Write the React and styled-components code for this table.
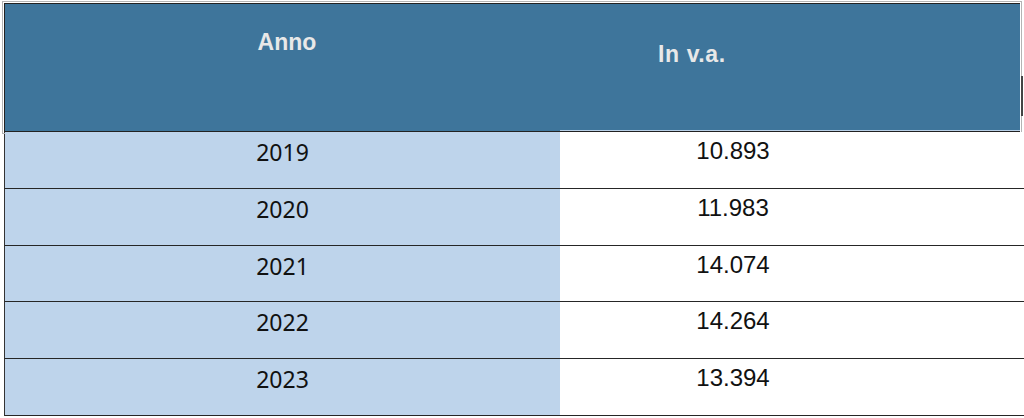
import React from 'react';
import styled, { createGlobalStyle } from 'styled-components';

const rows = [
  { year: '2019', value: '10.893' },
  { year: '2020', value: '11.983' },
  { year: '2021', value: '14.074' },
  { year: '2022', value: '14.264' },
  { year: '2023', value: '13.394' }
];

const App = () => (
  <>
    <GlobalStyle />
    <Frame>
      <HeadWrap>
        <Head>
          <HeadCell $pad="25px 0 0 9px" $align="center">Anno</HeadCell>
          <HeadCell $pad="37px 0 0 98px" $align="left" $spacing="0.6px" $underline>
            In v.a.
          </HeadCell>
        </Head>
        <ResizeHandle />
      </HeadWrap>
      {rows.map(r => (
        <Row key={r.year}>
          <YearCell>{r.year}</YearCell>
          <ValueCell>{r.value}</ValueCell>
        </Row>
      ))}
    </Frame>
  </>
);

const GlobalStyle = createGlobalStyle`
  html, body {
    margin: 0;
    padding: 0;
    background: #ffffff;
  }
`;

const Frame = styled.div`
  width: 1024px;
  height: 418px;
  overflow: hidden;
  padding-top: 3px;
  box-sizing: border-box;
`;

const HeadWrap = styled.div`
  display: flex;
  align-items: flex-start;
`;

const Head = styled.div`
  display: grid;
  grid-template-columns: 555px 1fr;
  margin-left: 4px;
  width: 1016px;
  height: 129px;
  box-sizing: border-box;
  background: #3e759b;
  border: 1px solid #222;
  border-right: none;
  outline: 1px solid #b4b4b4;
  outline-offset: 1px;
`;

const HeadCell = styled.div`
  padding: ${p => p.$pad};
  text-align: ${p => p.$align};
  font-family: 'Liberation Sans', Arial, sans-serif;
  font-weight: 700;
  font-size: 23px;
  line-height: 26px;
  letter-spacing: ${p => p.$spacing || '0'};
  color: #e8e8e8;
  box-sizing: border-box;
  border-bottom: ${p => (p.$underline ? '1px solid #b7cfe6' : 'none')};
`;

const ResizeHandle = styled.div`
  width: 2px;
  height: 40px;
  margin: 73px 0 0 1px;
  background: #444;
`;

const Row = styled.div`
  display: grid;
  grid-template-columns: 555px 1fr;
  margin-left: 4px;
  height: 56.8px;
  box-sizing: border-box;
  border-left: 1px solid #333;
  border-bottom: 1.5px solid #262626;
`;

const YearCell = styled.div`
  background: #bed4eb;
  padding-top: 6px;
  text-align: center;
  font-family: 'Noto Sans', 'Open Sans', sans-serif;
  font-size: 23px;
  line-height: 28px;
  color: #111;
`;

const ValueCell = styled.div`
  background: #ffffff;
  padding: 5px 118px 0 0;
  text-align: center;
  font-family: 'Liberation Sans', Arial, sans-serif;
  font-size: 24px;
  line-height: 28px;
  color: #111;
`;

export default App;
